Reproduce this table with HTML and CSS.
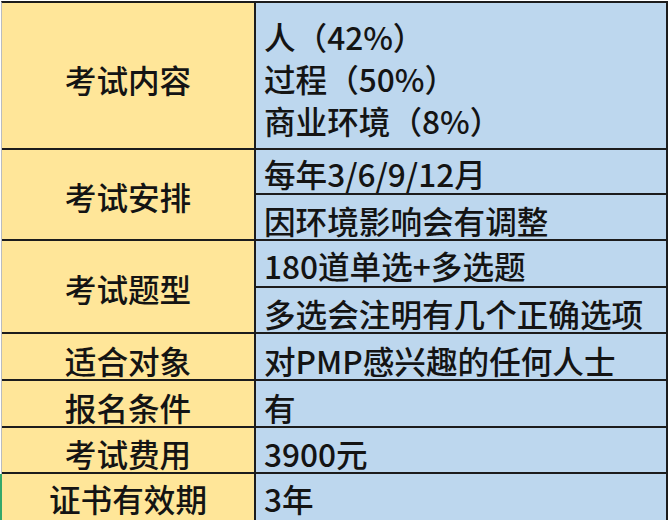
FILE: index.html
```html
<!DOCTYPE html>
<html lang="zh-CN">
<head>
<meta charset="utf-8">
<title>PMP考试信息</title>
<link rel="stylesheet" href="styles.css">
</head>
<body>
<div class="sheet">
  <div class="cell label r1">考试内容</div>
  <div class="cell value r1 multi">
    <div class="line">人（42%）</div>
    <div class="line">过程（50%）</div>
    <div class="line">商业环境（8%）</div>
  </div>

  <div class="cell label span2 h2a">考试安排</div>
  <div class="cell value h2a">每年3/6/9/12月</div>
  <div class="cell value h2b">因环境影响会有调整</div>

  <div class="cell label span2 h3a">考试题型</div>
  <div class="cell value h3a">180道单选+多选题</div>
  <div class="cell value h3b">多选会注明有几个正确选项</div>

  <div class="cell label h4">适合对象</div>
  <div class="cell value h4">对PMP感兴趣的任何人士</div>

  <div class="cell label h5">报名条件</div>
  <div class="cell value h5">有</div>

  <div class="cell label h6">考试费用</div>
  <div class="cell value h6">3900元</div>

  <div class="cell label h7 selected">证书有效期</div>
  <div class="cell value h7">3年</div>
</div>
</body>
</html>
```

FILE: styles.css
```css
html, body {
  margin: 0;
  padding: 0;
  background: #ffffff;
  overflow: hidden;
}

body {
  width: 672px;
  height: 520px;
  font-family: "Noto Sans CJK SC", "Noto Sans", sans-serif;
  color: #141414;
}

.sheet {
  margin: 1px 0 0 1px;
  width: 667px;
  box-sizing: border-box;
  border-top: 2px solid #1c1c1c;
  border-left: 1px solid #b9bcc0;
  display: grid;
  grid-template-columns: 254px 412px;
  grid-template-rows: 147px 45px 46px 47px 46px 47px 47px 46px 50px;
}

.cell {
  box-sizing: border-box;
  border-right: 2px solid #1c1c1c;
  border-bottom: 2px solid #1c1c1c;
  font-size: 31.6px;
  font-weight: 500;
  line-height: 40px;
  display: flex;
  align-items: center;
  padding-top: 6px;
  white-space: nowrap;
}

.label {
  background: #ffe699;
  justify-content: center;
}

.value {
  background: #bdd7ee;
  padding-left: 8px;
}

.span2 {
  grid-row: span 2;
  padding-top: 4px;
}

.multi {
  flex-direction: column;
  align-items: flex-start;
  justify-content: center;
  padding-top: 4px;
}

.multi .line {
  line-height: 42px;
}

.h2a, .h3a {
  padding-top: 2px;
}

.h7 {
  border-bottom: none;
  align-items: flex-start;
  padding-top: 4px;
}

.selected {
  box-shadow: -2px 0 0 #35a86a;
}
```
